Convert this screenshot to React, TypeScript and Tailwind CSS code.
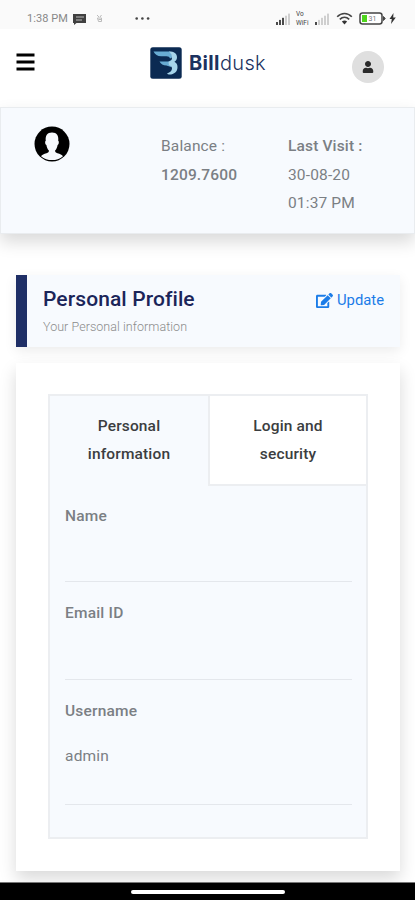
import React from 'react';
import { FaUser, FaEdit } from 'react-icons/fa';

const fields = [
  { label: 'Name', value: '' },
  { label: 'Email ID', value: '' },
  { label: 'Username', value: 'admin' },
];

function Signal({ strength }: { strength: number }) {
  return (
    <svg width="16" height="12" viewBox="0 0 16 12">
      {[0, 1, 2, 3, 4].map((i) => (
        <rect
          key={i}
          x={i * 3}
          y={9 - i * 2.1}
          width="2"
          height={3 + i * 2.1}
          fill={i < strength ? '#4a4a4a' : '#cfcfcf'}
        />
      ))}
    </svg>
  );
}

function StatusBar() {
  return (
    <div className="flex h-[29px] items-center bg-[#fafafa] pt-2 pl-[27px] text-[#5c5c5c]">
      <span className="w-[46px] text-[11px] leading-none tracking-[0.05px] whitespace-nowrap text-[#888]">
        1:38 PM
      </span>
      <svg className="shrink-0" width="13" height="12" viewBox="0 0 13 12">
        <path d="M0 1h13v9H3.5L1 12V10H0z" fill="#404040" />
        <path d="M3 4h8M3 7h6" stroke="#bbb" strokeWidth="1" />
      </svg>
      <svg className="ml-[10px] shrink-0" width="7" height="9" viewBox="0 0 7 9">
        <path d="M1 1l2 2M5.5 1L4 3M1.5 4h4v3.5h-3zM2.5 5.5h3" fill="none" stroke="#bbb" strokeWidth="1" />
      </svg>
      <svg className="ml-[32px] shrink-0" width="15" height="3" viewBox="0 0 15 3">
        <circle cx="1.7" cy="1.5" r="1.3" fill="#444" />
        <circle cx="7.4" cy="1.5" r="1.3" fill="#444" />
        <circle cx="13.1" cy="1.5" r="1.3" fill="#444" />
      </svg>
      <div className="ml-[126px] flex items-center">
        <Signal strength={3} />
        <div className="ml-[4px] flex w-[17px] flex-col gap-px text-[6.5px] leading-[8px] text-[#444]">
          <div>Vo</div>
          <div>WiFi</div>
        </div>
        <div className="ml-[2px]">
          <Signal strength={1} />
        </div>
        <svg className="ml-[5px]" width="17" height="13" viewBox="0 0 17 13">
          <path
            d="M1.2 4.8C5.4 .3 11.6 .3 15.8 4.8M3.8 7.4c2.8-2.8 6.6-2.8 9.4 0"
            fill="none"
            stroke="#444"
            strokeWidth="1.6"
          />
          <path d="M8.5 12.5L5.9 9.6c1.6-1.5 3.6-1.5 5.2 0z" fill="#333" />
        </svg>
        <svg className="ml-[6px]" width="27" height="13" viewBox="0 0 27 13">
          <rect x="1" y="1" width="22" height="11" rx="2.5" fill="#fff" stroke="#444" strokeWidth="1.5" />
          <path d="M24.5 4.5l1.7 2-1.7 2z" fill="#444" stroke="#444" />
          <rect x="3" y="3" width="5" height="7" fill="#4fd51c" />
          <text x="9.5" y="9.2" fontSize="7" fill="#777">
            31
          </text>
        </svg>
        <svg className="ml-[3px]" width="7" height="11" viewBox="0 0 7 11">
          <path d="M4.5 0L.5 6h2.3L2 11l4.8-6.6H4.2z" fill="#333" />
        </svg>
      </div>
    </div>
  );
}

function Logo() {
  return (
    <div className="flex items-center">
      <svg width="32" height="32" viewBox="0 0 32 32">
        <rect x=".3" y=".3" width="31.4" height="31.4" rx="2.5" fill="#0b2a52" />
        {/* upper and lower wing */}
        <path d="M3.5 4.5H20l3 5.500-3 1.500c-.5-1.500-1.500-2.200-3.500-2.200H11C7.500 9.300 5 7.500 3.500 4.500z" fill="#69acd3" />
        <path d="M9.500 14.500h9l3-1.500 1.500 4-2 3-4.500-1.500C13 18.500 11 17 9.500 14.500z" fill="#69acd3" />
        <path
          d="M19 4.500c5 0 8 2 8 5.700 0 2.100-1 3.600-2.600 4.500 2 1 3.100 2.900 3.100 5.300 0 4.800-3.500 7.700-8.500 7.500-.7 0-1.500-.3-2-1 3.200-1 5-2.800 5-5 0-1.700-1-2.800-3-3.300l-.5-3.500c2.200-.5 3.500-1.800 3.500-4 0-2.300-1-4.300-3-6.200z"
          fill="#a6d4e9"
        />
      </svg>
      <div className="ml-[7px] font-['Inter',sans-serif] text-[20px] leading-8 tracking-[0.35px] text-[#1c3260]">
        <span className="font-bold">Bill</span>
        <span className="font-light">dusk</span>
      </div>
    </div>
  );
}

function Header() {
  return (
    <header className="flex h-[78px] items-start bg-white px-4">
      <button className="mt-[24px] w-[134px] text-black">
        <svg width="19" height="18" viewBox="0 0 19 18">
          <path d="M.5 2h18M.5 9h18M.5 16h18" stroke="currentColor" strokeWidth="2.8" />
        </svg>
      </button>
      <div className="mt-[18px] flex-1">
        <Logo />
      </div>
      <button className="mt-[22px] mr-[15px] flex size-8 items-center justify-center rounded-full bg-[#dfdfdf] text-[#2b2b2b]">
        <FaUser size={12} />
      </button>
    </header>
  );
}

function AccountSummary() {
  return (
    <section className="flex h-[127px] border border-[#e9ecef] bg-[#f7fafe] pt-[24px] pl-[33px] text-[15.5px] leading-[28.5px] tracking-[0.15px] text-[#7b7f84] shadow-[0_8px_16px_rgba(0,0,0,0.15)]">
      <svg className="mt-[-6px] shrink-0" width="36" height="36" viewBox="0 0 36 36">
        <circle cx="18" cy="18" r="17.5" fill="#000" />
        <path
          d="M7 30.2c1-1.5 3-2 5.5-2.9 1.7-.7 2.5-1.2 2.4-2.7-1.4-1.4-2.2-3.4-2.5-5.6-1.3-.4-1.7-3.8-.6-4.3-.7-5 1.4-8.3 6.2-8.3s6.9 3.3 6.2 8.3c1.1.5.7 3.9-.6 4.3-.3 2.2-1.1 4.2-2.5 5.6-.1 1.5.7 2 2.4 2.7 2.5.9 4.5 1.4 5.5 2.9-6 5.2-16 5.2-22 0z"
          fill="#f7fafe"
        />
      </svg>
      <div className="ml-[91px] w-[127px]">
        <div>Balance :</div>
        <div className="font-medium">1209.7600</div>
      </div>
      <div>
        <div className="font-medium">Last Visit :</div>
        <div>30-08-20</div>
        <div>01:37 PM</div>
      </div>
    </section>
  );
}

function ProfileCard() {
  return (
    <section className="mr-[15px] ml-4 mt-[41px] flex h-[72px] justify-between border-l-[11px] border-[#1f2f66] bg-[#f7fafe] pt-3 pr-4 pl-4 shadow-[0_4px_12px_rgba(0,0,0,0.08)]">
      <div>
        <h1 className="text-[21px] leading-6 font-medium tracking-[0.1px] text-[#1b2559]">
          Personal Profile
        </h1>
        <p className="mt-[8px] text-[12.5px] leading-4 font-light tracking-[0.05px] text-[#8b8b8b]">
          Your Personal information
        </p>
      </div>
      <a href="#" className="mt-px flex h-6 items-center gap-1 text-[14.8px] text-[#1b7ce8]">
        <FaEdit size={17} />
        Update
      </a>
    </section>
  );
}

function Details() {
  return (
    <section className="mr-[15px] ml-4 mt-4 h-[508px] bg-white px-8 pt-[31px] shadow-[0_8px_16px_rgba(0,0,0,0.15)]">
      <div className="h-[445px] border-2 border-[#eceef1] bg-[#f7fafe]">
        <div className="flex h-[90px] text-center text-[15.5px] leading-[28.5px] font-medium tracking-[0.15px] text-[#3b3d40]">
          <button className="w-1/2 px-8 pb-0.5">Personal information</button>
          <button className="w-1/2 border-b-2 border-l-2 border-[#eceef1] bg-white px-8">
            Login and security
          </button>
        </div>
        <div className="pr-[14px] pl-[15px] text-[15.5px] tracking-[0.2px] text-[#7b7f84]">
          {fields.map((field) => (
            <div
              key={field.label}
              className="border-b border-[#e4e7ec] pt-[17px] first:pt-[15.5px]"
            >
              <div className="leading-[28.5px] font-medium">{field.label}</div>
              <div className={field.value ? 'h-[79px] pt-[17px] leading-[28.5px]' : 'h-[51px]'}>
                {field.value}
              </div>
            </div>
          ))}
        </div>
      </div>
    </section>
  );
}

export default function App() {
  return (
    <div className="flex h-[900px] w-full flex-col overflow-hidden bg-white font-['Roboto',sans-serif]">
      <StatusBar />
      <Header />
      <AccountSummary />
      <ProfileCard />
      <Details />
      <div className="relative mt-auto flex h-[18px] items-center justify-center border-t border-[#777] bg-black">
        <div className="h-1 w-[154px] rounded-full bg-white" />
      </div>
    </div>
  );
}
